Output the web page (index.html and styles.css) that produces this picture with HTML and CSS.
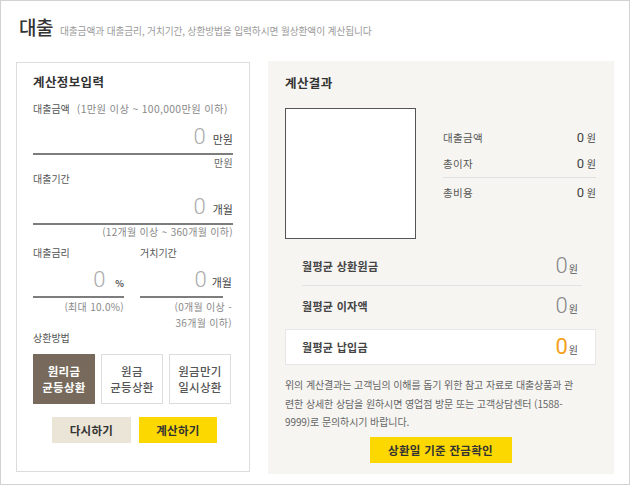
FILE: index.html
```html
<!DOCTYPE html>
<html lang="ko">
<head>
<meta charset="utf-8">
<title>대출 계산기</title>
<link rel="stylesheet" href="styles.css">
</head>
<body>
<div class="page">
  <header class="hd">
    <h1 class="hd-title">대출</h1>
    <p class="hd-sub">대출금액과 대출금리, 거치기간, 상환방법을 입력하시면 월상환액이 계산됩니다</p>
  </header>
  <main class="main">
    <section class="inp">
      <h2 class="sec-title">계산정보입력</h2>
      <div class="lbl lbl-amt">대출금액<span class="range">(1만원 이상 ~ 100,000만원 이하)</span></div>
      <div class="field field-amt"><span class="num">0</span><span class="unit">만원</span></div>
      <div class="hint hint-unit">만원</div>
      <div class="lbl lbl-term">대출기간</div>
      <div class="field field-term"><span class="num">0</span><span class="unit">개월</span></div>
      <div class="hint">(12개월 이상 ~ 360개월 이하)</div>
      <div class="split">
        <div class="col">
          <div class="lbl">대출금리</div>
          <div class="field field-split"><span class="num">0</span><span class="unit unit-pct">%</span></div>
          <div class="hint hint-split">(최대 10.0%)</div>
        </div>
        <div class="col col-right">
          <div class="lbl">거치기간</div>
          <div class="field field-split field-grace"><span class="num">0</span><span class="unit unit-grace">개월</span></div>
          <div class="hint hint-split">(0개월 이상 -<br>36개월 이하)</div>
        </div>
      </div>
      <div class="lbl lbl-method">상환방법</div>
      <div class="methods">
        <button class="method is-on">원리금<br>균등상환</button>
        <button class="method">원금<br>균등상환</button>
        <button class="method">원금만기<br>일시상환</button>
      </div>
      <div class="actions">
        <button class="btn btn-reset">다시하기</button>
        <button class="btn btn-calc">계산하기</button>
      </div>
    </section>
    <section class="res">
      <h2 class="sec-title">계산결과</h2>
      <div class="res-top">
        <div class="chart"></div>
        <ul class="sum">
          <li class="sum-row"><span class="sum-lbl">대출금액</span><span class="sum-val"><b>0</b> 원</span></li>
          <li class="sum-row sum-row-sep"><span class="sum-lbl">총이자</span><span class="sum-val"><b>0</b> 원</span></li>
          <li class="sum-row"><span class="sum-lbl">총비용</span><span class="sum-val"><b>0</b> 원</span></li>
        </ul>
      </div>
      <div class="monthly">
        <div class="m-row m-row-sep"><span class="m-lbl">월평균 상환원금</span><span class="m-val"><span class="m-num">0</span>원</span></div>
        <div class="m-row"><span class="m-lbl">월평균 이자액</span><span class="m-val"><span class="m-num">0</span>원</span></div>
      </div>
      <div class="m-box"><span class="m-lbl">월평균 납입금</span><span class="m-val"><span class="m-num m-num-hl">0</span>원</span></div>
      <p class="note">위의 계산결과는 고객님의 이해를 돕기 위한 참고 자료로 대출상품과 관<br>련한 상세한 상담을 원하시면 영업점 방문 또는 고객상담센터 (1588-<br>9999)로 문의하시기 바랍니다.</p>
      <div class="res-act"><button class="btn btn-balance">상환일 기준 잔금확인</button></div>
    </section>
  </main>
</div>
</body>
</html>
```

FILE: styles.css
```css
* { box-sizing: border-box; }
html, body { margin: 0; padding: 0; background: #fff; }
body {
  font-family: "Noto Sans CJK KR", "Noto Sans", sans-serif;
  color: #555;
  font-size: 10px;
}
.page {
  width: 630px;
  height: 485px;
  border: 1px solid #d2d2d2;
  padding: 0 0 0 15px;
  overflow: hidden;
}
.hd {
  display: flex;
  align-items: baseline;
  padding: 16px 0 0 3px;
  height: 37px;
}
.hd-title {
  margin: 0;
  font-size: 19px;
  line-height: 20px;
  font-weight: 500;
  color: #333;
  letter-spacing: -0.5px;
}
.hd-sub {
  margin: 0 0 0 7px;
  font-size: 9.7px;
  color: #9a9a9a;
  letter-spacing: -0.1px;
}
.main {
  display: flex;
  align-items: flex-start;
  margin-top: 23px;
}
/* left input panel */
.inp {
  width: 234px;
  height: 410px;
  margin-top: 1px;
  border: 1px solid #dcdcdc;
  padding: 10px 16px 0 16px;
}
.sec-title {
  margin: 0;
  font-size: 12.5px;
  line-height: 18px;
  font-weight: 700;
  color: #333;
  letter-spacing: 0.4px;
}
.lbl {
  font-size: 10px;
  line-height: 14px;
  color: #555;
}
.lbl-amt { margin-top: 11px; display: flex; }
.range { margin-left: 7px; color: #888; font-size: 10.3px; letter-spacing: 0.35px; }
.lbl-term { margin-top: 2px; }
.field {
  display: flex;
  justify-content: flex-end;
  align-items: baseline;
  height: 31px;
  padding-top: 1px;
  border-bottom: 2px solid #7d7d7d;
  margin-top: 8px;
}
.num {
  font-family: Roboto, "Liberation Sans", sans-serif;
  font-weight: 300;
  font-size: 22px;
  line-height: 24px;
  color: #ababab;
}
.unit {
  margin-left: 7px;
  font-size: 11px;
  color: #444;
}
.unit-pct { margin-left: 10px; font-size: 9px; font-weight: 700; color: #555; }
.hint {
  text-align: right;
  font-size: 10px;
  line-height: 14px;
  color: #888;
  letter-spacing: 0.3px;
}
.hint-unit { margin-top: 1px; color: #666; }
.split {
  display: grid;
  grid-template-columns: 91px 92px;
  column-gap: 16px;
  margin-top: 7px;
}
.field-split { margin-top: 7px; }
.field-grace { margin-right: 9px; }
.unit-grace { margin-right: -9px; margin-left: 5px; }
.hint-split { line-height: 16px; margin-top: 1px; }
.lbl-method { margin-top: 0; }
.methods {
  display: grid;
  grid-template-columns: repeat(3, 62px);
  column-gap: 6px;
  margin-top: 9px;
}
.method {
  height: 50px;
  border: 1px solid #dcdcdc;
  background: #fff;
  color: #555;
  font-family: inherit;
  font-size: 11.5px;
  line-height: 16px;
  font-weight: 500;
  padding: 0;
  letter-spacing: 0.3px;
}
.method.is-on {
  background: #776a5c;
  border-color: #776a5c;
  color: #fff;
  font-weight: 700;
}
.actions {
  display: flex;
  justify-content: center;
  gap: 8px;
  margin-top: 13px;
  padding-left: 3px;
}
.btn {
  height: 26px;
  border: 0;
  padding: 0;
  font-family: inherit;
  font-size: 11.5px;
  font-weight: 700;
  color: #333;
  letter-spacing: 0.3px;
}
.btn-reset { width: 79px; background: #ebe5d8; }
.btn-calc { width: 78px; background: #fcd700; }
/* right result panel */
.res {
  width: 346px;
  height: 413px;
  margin-left: 18px;
  background: #f6f5f2;
  padding: 13px 18px 0 17px;
}
.res-top {
  display: flex;
  align-items: flex-start;
  margin-top: 16px;
}
.chart {
  width: 131px;
  height: 131px;
  border: 1px solid #555;
  background: #fff;
}
.sum {
  list-style: none;
  margin: 17px 0 0 27px;
  padding: 0;
  flex: 1;
}
.sum-row {
  display: flex;
  justify-content: space-between;
  align-items: baseline;
  height: 26px;
  line-height: 26px;
}
.sum-row-sep { border-bottom: 1px solid #e0e0e0; height: 27px; margin-bottom: 2px; }
.sum-lbl { font-size: 10.5px; color: #555; letter-spacing: 0.3px; }
.sum-val { font-size: 10px; color: #444; }
.sum-val b {
  font-family: Roboto, "Liberation Sans", sans-serif;
  font-weight: 400;
  font-size: 13px;
  color: #444;
}
.monthly {
  margin: 8px 0 0 17px;
  width: 280px;
}
.m-row {
  display: flex;
  justify-content: space-between;
  align-items: center;
  height: 40px;
  padding-right: 4px;
}
.m-row-sep { height: 39px; border-bottom: 1px solid #e3e3e3; }
.m-lbl { font-size: 11px; font-weight: 700; color: #444; letter-spacing: 0.3px; }
.m-val { font-size: 10px; color: #555; display: flex; align-items: baseline; }
.m-num {
  font-family: Roboto, "Liberation Sans", sans-serif;
  font-weight: 300;
  font-size: 22px;
  line-height: 24px;
  color: #888;
  margin-right: 1px;
}
.m-num-hl { color: #f4a21c; font-weight: 400; }
.m-box {
  display: flex;
  justify-content: space-between;
  align-items: center;
  height: 36px;
  margin-top: 3px;
  background: #fff;
  border: 1px solid #e6e6e6;
  padding: 0 17px 0 16px;
}
.note {
  margin: 11px 0 0;
  font-size: 10px;
  line-height: 18.5px;
  color: #666;
  white-space: nowrap;
  letter-spacing: -0.1px;
}
.res-act {
  display: flex;
  justify-content: center;
  margin-top: 5px;
}
.btn-balance { width: 142px; background: #fcd700; font-size: 11.5px; }
```
